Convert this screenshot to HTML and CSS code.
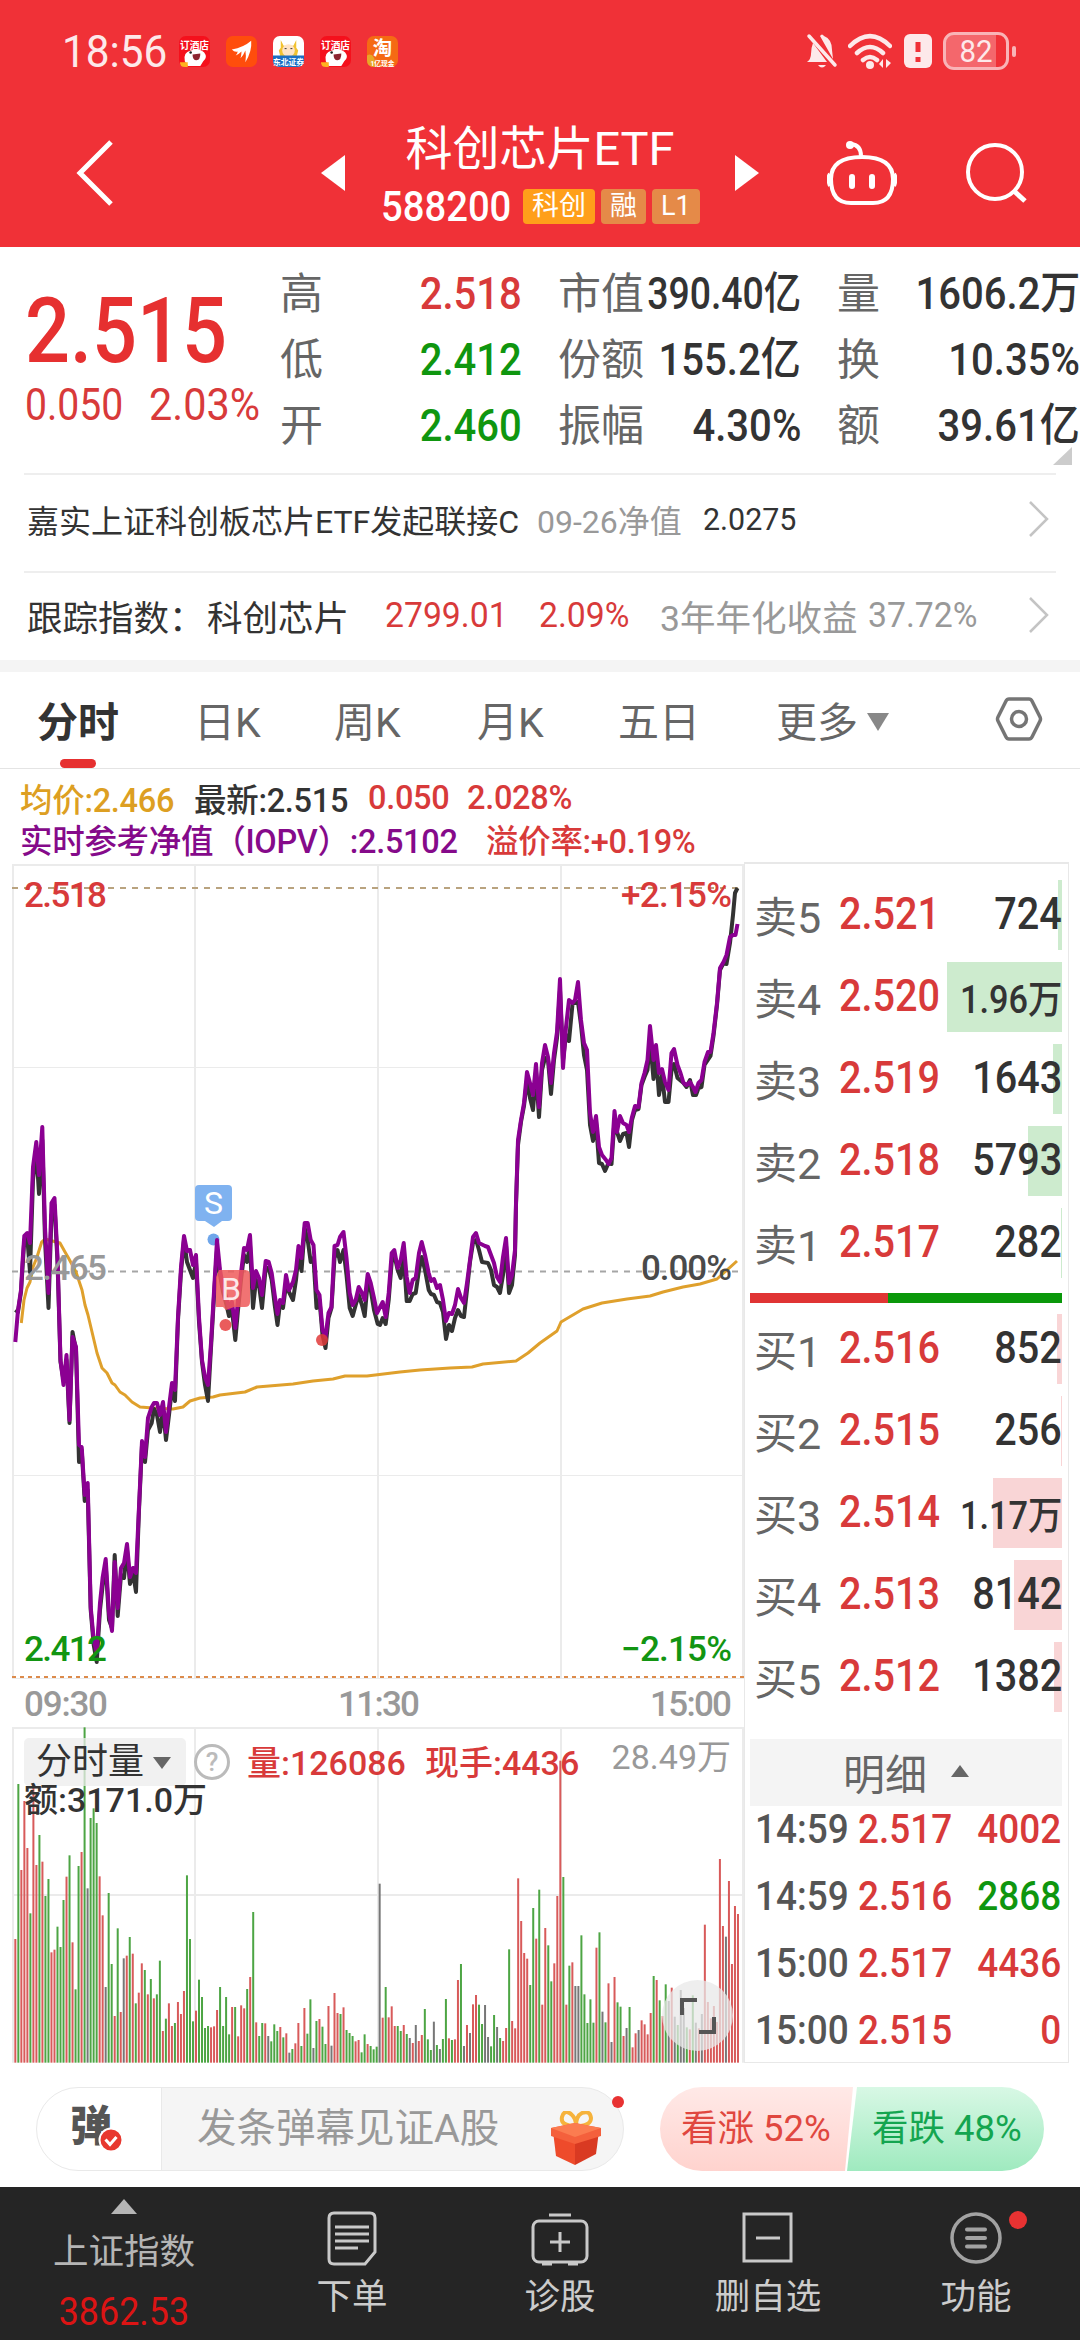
FILE: index.html
```html
<!DOCTYPE html>
<html lang="zh-CN">
<head>
    <meta charset="UTF-8">
    <meta name="viewport" content="width=device-width, initial-scale=1.0">
    <title>科创芯片ETF 588200</title>
    <link rel="stylesheet" href="styles.css">
</head>
<body>
    <header class="top">
        <div class="status-bar">
            <span class="clock">18:56</span>
            <div class="app-icons">
                <svg viewBox="0 0 32 32"><rect width="32" height="32" rx="7" fill="#f5101c"/><text x="16" y="13" class="app-text" font-size="10">订酒店</text><path d="M6 26q-2-9 6-11q9-3 14 2q4 5-1 9l-3 5H9z" fill="#fff"/><path d="M14 19l8-1q0 7-4 7t-4-6z" fill="#8d2430"/><circle cx="12" cy="17" r="1.3" fill="#222"/><path d="M1 27h8v5H6q-5 0-5-5z" fill="#ffb21e"/></svg>
                <svg viewBox="0 0 32 32"><rect width="32" height="32" rx="7" fill="#ff4d0c"/><path d="M6 14Q18 12 26 5Q27 16 20 27Q21 20 20 15Q18 20 15 23Q16 19 16 16Q13 19 10 20Q12 18 12 16Q9 17 6 14z" fill="#fff"/></svg>
                <svg viewBox="0 0 32 32"><rect width="32" height="32" rx="7" fill="#fff"/><path d="M8 4l3 6h10l3-6v8l2 3-2 8H8l-2-8 2-3z" fill="#f2c230"/><circle cx="16" cy="15" r="6.500" fill="#ffe3c4"/><path d="M12 13h2M18 13h2" stroke="#333"/><path d="M0 20h32v5q0 7-7 7H7q-7 0-7-7z" fill="#1b6fc4"/><text x="16" y="29.500" class="app-text" font-size="8">东北证券</text></svg>
                <svg viewBox="0 0 32 32"><rect width="32" height="32" rx="7" fill="#f5101c"/><text x="16" y="13" class="app-text" font-size="10">订酒店</text><path d="M6 26q-2-9 6-11q9-3 14 2q4 5-1 9l-3 5H9z" fill="#fff"/><path d="M14 19l8-1q0 7-4 7t-4-6z" fill="#8d2430"/><circle cx="12" cy="17" r="1.300" fill="#222"/><path d="M1 27h8v5H6q-5 0-5-5z" fill="#ffb21e"/></svg>
                <svg viewBox="0 0 32 32"><rect width="32" height="32" rx="7" fill="#f56a14"/><path d="M0 20q8-4 9 12H7q-7 0-7-7z" fill="#e8a727"/><text x="16" y="20" class="app-text" font-size="20">淘</text><text x="16" y="30.500" class="app-text" font-size="7">1亿现金</text></svg>
            </div>
            <div class="sys-icons">
                <svg class="bell" viewBox="0 0 32 36"><path d="M14 3q2-3 4 0q8 3 8 14l1 9zM7 10Q5 15 5 21q0 5-4 8h20zM12 32h8q-4 5-8 0z" fill="#fde9ea"/><path d="M3 3l26 29" stroke="#fde9ea" stroke-width="3.500" stroke-linecap="round"/></svg>
                <svg class="wifi" viewBox="0 0 44 36"><path d="M2 13q20-20 40 0M9 20q13-12 26 0M15 27q7-6 14 0" fill="none" stroke="#fde9ea" stroke-width="4.500" stroke-linecap="round"/><circle cx="22" cy="32" r="4" fill="#fde9ea"/><path d="M35 26v9l-4-4zM38 26v9l5-5z" fill="#fde9ea"/></svg>
                <svg class="sim" viewBox="0 0 28 34"><rect width="28" height="34" rx="6" fill="#fde9ea"/><path d="M14 8v10M14 23v5" stroke="#f03137" stroke-width="5"/></svg>
                <div class="battery"><span>82</span></div><i class="battery-nub"></i>
            </div>
        </div>
        <div class="title-bar">
            <svg class="back" viewBox="0 0 40 68"><path d="M36 3L5 34l31 31" fill="none" stroke="#fff" stroke-width="5"/></svg>
            <svg class="prev" viewBox="0 0 24 36"><path d="M24 0v36L0 18z" fill="#fff"/></svg>
            <div class="stock">
                <h1>科创芯片ETF</h1>
                <div class="stock-code">
                    <span class="code">588200</span>
                    <span class="tag tag-main">科创</span><span class="tag">融</span><span class="tag">L1</span>
                </div>
            </div>
            <svg class="next" viewBox="0 0 24 36"><path d="M0 0v36l24-18z" fill="#fff"/></svg>
            <svg class="robot" viewBox="0 0 70 66" fill="none" stroke="#fff" stroke-width="4"><path d="M34 16Q34 5 24 4"/><circle cx="23" cy="5" r="4" fill="#fff" stroke="none"/><path d="M35 17q31 0 31 22q0 24-20 24H24Q4 63 4 39q0-22 31-22z"/><path d="M3 34q-3 4 0 12M67 34q3 4 0 12"/><path d="M25 37v9M45 37v9" stroke-width="6" stroke-linecap="round"/></svg>
            <svg class="search" viewBox="0 0 62 62" fill="none" stroke="#fff" stroke-width="4"><circle cx="29" cy="30" r="27"/><path d="M48 49l11 10" stroke-width="5"/></svg>
        </div>
    </header>

    <section class="quote">
        <div class="price">
            <div class="last">2.515</div>
            <div class="change"><span>0.050</span><span>2.03%</span></div>
        </div>
        <div class="stats">
            <label>高</label><span class="red">2.518</span><label>市值</label><span class="tight">390.40亿</span><label>量</label><span>1606.2万</span>
            <label>低</label><span class="green">2.412</span><label>份额</label><span>155.2亿</span><label>换</label><span>10.35%</span>
            <label>开</label><span class="green">2.460</span><label>振幅</label><span>4.30%</span><label>额</label><span>39.61亿</span>
        </div>
        <i class="corner"></i>
    </section>

    <section class="links">
        <div class="link-row fund">
            <span>嘉实上证科创板芯片ETF发起联接C</span>
            <span class="muted">09-26净值</span>
            <span class="narrow">2.0275</span>
            <svg class="chevron" viewBox="0 0 20 36"><path d="M1 1l17 17L1 35" fill="none" stroke="#c4c4c4" stroke-width="2.500"/></svg>
        </div>
        <div class="link-row track">
            <span>跟踪指数：</span>
            <span>科创芯片</span>
            <span class="red narrow">2799.01</span>
            <span class="red narrow">2.09%</span>
            <span class="muted">3年年化收益</span>
            <span class="muted narrow">37.72%</span>
            <svg class="chevron" viewBox="0 0 20 36"><path d="M1 1l17 17L1 35" fill="none" stroke="#c4c4c4" stroke-width="2.500"/></svg>
        </div>
    </section>

    <nav class="tabs">
        <span class="active">分时</span>
        <span>日K</span>
        <span>周K</span>
        <span>月K</span>
        <span>五日</span>
        <span>更多<i class="down"></i></span>
        <svg class="hex" viewBox="0 0 50 50" fill="none" stroke="#757575" stroke-width="3.500"><path d="M15 5h20q2 0 3 2l8 16q1 2 0 4l-8 16q-1 2-3 2H15q-2 0-3-2L4 27q-1-2 0-4l8-16q1-2 3-2z"/><circle cx="25" cy="25" r="7.500"/></svg>
    </nav>

    <section class="legend">
        <div class="legend-row one"><span class="gold">均价:2.466</span><span>最新:2.515</span><span class="red">0.050</span><span class="red">2.028%</span></div>
        <div class="legend-row two"><span class="purple">实时参考净值（IOPV）:2.5102</span><span class="red">溢价率:+0.19%</span></div>
    </section>

    <main class="board">
        <div class="charts">
            <!-- Intraday line chart -->
            <svg class="trend" viewBox="0 862 744 864">
                <g class="grid">
                    <path d="M12 865H744M13 865V1678M195 865V1678M378 865V1678M561 865V1678M743 865V1678" stroke-width="2"/>
                    <path d="M12 1067.500H744M12 1475.500H744M12 1678.500H744" stroke-width="1"/>
                </g>
                <path class="dash" d="M12 888H738" stroke="#b9a37f"/>
                <path class="dash" d="M12 1271.500H738" stroke="#a5a5a5"/>
                <path d="M12 1677H744" stroke="#dc8a4a" stroke-width="2" stroke-dasharray="4 4"/>
                <g class="marks">
                    <rect x="195" y="1185" width="37" height="36" rx="4" fill="#7fb2f0"/>
                    <path d="M205 1221h17l-8 6z" fill="#7fb2f0"/>
                    <text x="213.500" y="1214" font-size="32" text-anchor="middle" fill="#fff">S</text>
                    <circle cx="213.500" cy="1239.500" r="6" fill="#6fa6ea"/>
                </g>
                <polyline class="avg" points="21.300,1323 24,1300 27,1288 30,1282 33,1267 36.700,1258 41.700,1242 45,1239 60,1243 65,1252 68.500,1258 76,1272 82,1290 85,1305 88,1315 97,1353 102,1368 107,1373 112,1383 115,1385 120,1392 125,1395 132,1402 140,1407 153,1408 173,1409 183,1407 190,1401 200,1398 213,1397 220,1395 245,1392 257,1387 293,1384 313,1381 333,1379 345,1376 367,1376 400,1372 420,1370 450,1368 472,1367 483,1364 516,1361 528,1353 540,1343 557,1331 561,1322 583,1309 602,1303 627,1299 650,1296 663,1292 683,1287 700,1284 717,1279 737,1261"/>
                <polyline class="last-line" points="15.300,1310 18,1312 21,1292 24.300,1240 27.300,1238 30,1272 33,1180 36.300,1150 39,1194 42.300,1140 45,1240 48.500,1308 51.500,1215 54.500,1205 57.500,1262 60.500,1362 63.500,1380 66.500,1360 69.500,1423 72.500,1332 76,1350 79,1462 81.700,1450 84.700,1501 87.700,1490 90.700,1610 93.700,1645 96.700,1662 100,1610 102.700,1585 105.700,1565 109,1620 112,1628 114.700,1555 117.700,1616 121,1575 124,1578 127,1550 130,1584 133,1573 136,1592 139,1510 142,1445 145,1462 148,1430 151.700,1423 154,1409 157,1415 160,1432 163,1410 166,1440 169,1415 172,1388 175,1401 178,1320 181,1272 184,1240 187,1262 190,1270 193,1278 196,1262 199,1322 202,1362 205,1385 208,1401 211,1348 214.500,1288 217,1250 220,1275 223,1292 226.500,1305 229,1316 232,1310 235.300,1340 238,1310 241,1280 244,1255 247,1262 250,1245 253,1308 256,1280 259,1285 262,1308 265.700,1268 268.700,1268 271.700,1280 274.700,1305 277.500,1325 280,1303 283,1308 286,1285 289,1292 293,1300 296,1280 298.500,1255 301.500,1271 304.700,1228 307.700,1240 310.700,1262 313.500,1258 316.500,1308 319.500,1300 322.500,1335 325.500,1348 328.500,1318 331.500,1308 334.500,1258 337.500,1250 340,1262 343.500,1250 346.500,1275 349.700,1308 352.700,1316 355.700,1305 358.700,1295 362,1305 364.700,1316 367.700,1282 370.700,1290 374,1310 377.700,1324 380,1325 382.700,1318 385.700,1324 388.700,1300 391.700,1262 394.300,1255 397.700,1270 400.700,1278 403.700,1255 406.700,1301 409.700,1301 412.700,1294 415.700,1293 419,1270 421.700,1257 425,1270 428.700,1290 431,1294 434,1295 437,1302 440,1303 443,1312 446,1339 449,1325 452,1331 455,1318 458,1310 461,1316 464,1317 467,1290 470,1262 473,1243 476,1240 479,1250 482,1262 488,1263 491,1270 494,1285 497,1287 500,1293 503,1275 506,1245 509,1293 512,1285 515,1255 516,1205 518,1145 521,1122 524,1106 527,1080 530,1098 533,1110 536,1072 539,1117 542,1070 545,1058 548,1060 551,1094 554,1060 557,1038 560,990 563,1060 566,1035 569,1041 572.500,1004 575,1003 578,1002 581,1025 584,1055 587,1070 590,1125 593,1141 596,1122 599,1163 602,1164 605,1171 608.500,1163 611.500,1164 614.500,1120 617,1132 620,1141 623,1134 626.500,1133 629,1147 632,1120 635,1110 638.500,1109 641.500,1085 644.500,1077 647.500,1070 650,1040 653.500,1079 656,1055 659,1095 662,1075 665,1102 668.500,1102 671.500,1070 674,1064 677.500,1078 683.500,1083 686.500,1087 690,1080 693,1095 696,1095 698.500,1088 701.500,1087 704.500,1065 710.500,1056 713.500,1036 717,1005 720,970 723.500,963 726.500,964 730,943 733,915 735,893 737.500,888"/>
                <polyline class="iopv" points="15.300,1342 18,1310 21,1290 22.500,1262 24.300,1236 27.300,1233 30,1243 33,1167 36.300,1142 39,1175 42.300,1127 45,1227 48.500,1293 51.500,1203 54.500,1198 57.500,1257 60.500,1360 63.500,1385 66.500,1355 69.500,1420 72.500,1337 76,1347 79,1445 81.700,1447 84.700,1495 87.700,1483 90.700,1607 93.700,1640 96.700,1652 100,1603 102.700,1577 105.700,1559 109,1613 112,1631 114.700,1562 117.700,1608 121,1568 124,1563 127,1544 130,1577 133,1568 136,1573 139,1507 142,1441 145,1457 148,1418 151.700,1407 154,1403 157,1403 160,1415 163,1402 166,1432 169,1407 172,1383 175,1390 178,1317 181,1267 184,1236 187,1251 190,1250 193,1265 196,1255 199,1317 202,1360 205,1377 208,1385 211,1343 214.500,1283 217,1240 220,1270 223,1287 226.500,1298 229,1308 232,1302 235.300,1328 238,1300 241,1273 244,1248 247,1250 250,1235 253,1288 256,1271 259,1278 262,1295 265.700,1261 268.700,1262 271.700,1273 274.700,1295 277.500,1314 280,1300 283,1303 286,1275 289,1290 293,1282 296,1270 298.500,1246 301.500,1258 304.700,1223 307.700,1223 310.700,1240 313.500,1245 316.500,1290 319.500,1295 322.500,1330 325.500,1337 328.500,1313 331.500,1307 334.500,1246 337.500,1245 340,1237 343.500,1232 346.500,1258 349.700,1293 352.700,1305 355.700,1300 358.700,1287 362,1293 364.700,1300 367.700,1274 370.700,1283 374,1298 377,1313 382.700,1302 385.700,1317 388.700,1293 391.700,1253 394.300,1250 397.700,1268 400.700,1260 403.700,1243 406.700,1277 409.700,1293 412.700,1280 415.700,1278 419,1253 421.700,1242 425,1255 428.700,1273 431,1281 434,1279 437,1288 440,1285 443,1300 446,1321 449,1313 452,1314 455,1305 458,1289 461,1298 464,1303 467,1283 470,1260 473,1237 476,1233 479,1243 485,1246 488,1247 494,1263 497,1277 500,1282 503,1257 506,1238 509,1283 512,1275 515,1250 516,1203 518,1140 521,1120 524,1103 527,1072 530,1083 533,1095 536,1064 539,1107 542,1063 545,1045 548,1057 551,1083 554,1053 557,1032 560,979 563,1068 566,1027 569,1000 572.500,1003 575,1000 578,982 581,1020 584,1043 587,1050 590,1113 593,1132 596,1116 599,1147 602,1155 606,1160 608.500,1164 611.500,1158 614.500,1111 617,1132 620,1116 623,1123 626.500,1125 629,1132 632,1117 635,1106 638.500,1107 641.500,1083 644.500,1073 647.500,1060 650,1026 653.500,1060 656,1045 659,1073 662,1069 665,1082 668.500,1090 671.500,1053 674,1049 677.500,1065 680.500,1073 683.500,1083 686.500,1085 690,1082 693,1087 695.500,1092 698.500,1083 701.500,1080 704.500,1062 708,1052 710.500,1052 713.500,1033 717,1003 720,968 723.500,962 726.500,955 730,937 733,935 735.500,935 737.500,924"/>
                <g class="marks">
                    <path d="M219 1270h26q5 0 5 5v27q0 5-5 5h-11l-8 3-3-3h-7v-30z" fill="#ee5a5a" opacity=".85"/>
                    <text x="231" y="1300" font-size="32" text-anchor="middle" fill="#fff" opacity=".85">B</text>
                    <circle cx="225.500" cy="1325" r="6" fill="#e64040" opacity=".85"/>
                    <circle cx="322" cy="1340" r="6" fill="#e03a3a" opacity=".85"/>
                </g>
                <g class="axis">
                    <text x="24" y="907" textLength="83" fill="#d83a3a">2.518</text>
                    <text x="24" y="1280" textLength="83" fill="#999">2.465</text>
                    <text x="24" y="1661" textLength="83" fill="#129512">2.412</text>
                    <text x="621" y="907" textLength="111" fill="#d83a3a">+2.15%</text>
                    <text x="641" y="1280" textLength="91" fill="#4a4a4a">0.00%</text>
                    <text x="621" y="1661" textLength="111" fill="#129512">−2.15%</text>
                    <text x="24" y="1716" textLength="84" fill="#999">09:30</text>
                    <text x="338" y="1716" textLength="82" fill="#999">11:30</text>
                    <text x="650" y="1716" textLength="82" fill="#999">15:00</text>
                </g>
            </svg>

            <!-- Volume chart, bars are filled in by script.js -->
            <div class="volume">
                <svg class="bars" viewBox="0 168 2232 1014">
                    <g class="grid" stroke-width="6"><path d="M36 174H2232M36 675H2232M39 174V1178M585 174V1178M1134 174V1178M1683 174V1178M2229 174V1178"/></g>
                    <g id="bars"></g>
                </svg>
                <div class="volume-info">
                    <span class="picker">分时量<i class="down"></i></span>
                    <span class="help">?</span>
                    <span class="red vol">量:126086</span>
                    <span class="red">现手:4436</span>
                    <span class="muted max">28.49万</span>
                </div>
                <div class="amount">额:3171.0万</div>
                <div class="expand"><svg viewBox="0 0 36 36" fill="none" stroke="#555" stroke-width="4"><path d="M17 2H2v15M34 19v15H19"/></svg></div>
            </div>
        </div>

        <aside class="book">
            <div class="depth" id="asks"></div>
            <div class="ratio"><i></i></div>
            <div class="depth" id="bids"></div>
            <div class="detail-title">明细<i class="up"></i></div>
            <div class="ticks">
                <span>14:59</span><span class="red">2.517</span><span class="red">4002</span>
                <span>14:59</span><span class="red">2.516</span><span class="green">2868</span>
                <span>15:00</span><span class="red">2.517</span><span class="red">4436</span>
                <span>15:00</span><span class="red">2.515</span><span class="red">0</span>
            </div>
        </aside>
    </main>

    <section class="social">
        <div class="danmu">
            <div class="danmu-switch">弹<svg viewBox="0 0 26 26"><circle cx="13" cy="13" r="11.500" fill="#e8382f" stroke="#fff" stroke-width="2"/><path d="M7.500 12.500l4.500 5 6.500-7.500" fill="none" stroke="#fff" stroke-width="3"/></svg></div>
            <div class="danmu-input">发条弹幕见证A股</div>
            <svg class="gift" viewBox="0 0 50 54"><path d="M25 15Q9 15 11 6q2-8 9-3 5 4 5 12Q25 5 31 2q8-3 9 5 0 8-15 8z" fill="none" stroke="#f6b33c" stroke-width="4"/><path d="M2 20l22 7v27L5 45z" fill="#ee4b2b"/><path d="M48 20l-24 7v27l21-11z" fill="#d93a22"/><path d="M0 17l24-5 26 5v8l-26 8L0 25z" fill="#f4603c"/><path d="M0 17l24-5 26 5-26 9z" fill="#fb7c50"/></svg>
            <i class="dot"></i>
        </div>
        <div class="vote">
            <span class="rise">看涨 52%</span>
            <span class="fall">看跌 48%</span>
        </div>
    </section>

    <footer class="bottom-nav">
        <div class="index"><i class="up"></i><span>上证指数</span><b>3862.53</b></div>
        <div class="nav-item">
            <svg viewBox="0 0 60 56" fill="none" stroke="#c9c9c9" stroke-width="3"><path d="M12 3h36q5 0 5 5v34L43 54H12q-5 0-5-5V8q0-5 5-5z"/><path d="M13 17h34M13 24h34M13 31h34M13 38h23"/></svg>
            <span>下单</span>
        </div>
        <div class="nav-item">
            <svg viewBox="0 0 60 56" fill="none" stroke="#c9c9c9" stroke-width="3"><rect x="3" y="11" width="54" height="41" rx="6"/><path d="M19 5h22M20 32h20M30 22v20M12 54h10M38 54h10"/></svg>
            <span>诊股</span>
        </div>
        <div class="nav-item">
            <svg viewBox="0 0 60 56" fill="none" stroke="#c9c9c9" stroke-width="3"><rect x="6" y="4" width="47" height="47"/><path d="M18 28h24"/></svg>
            <span>删自选</span>
        </div>
        <div class="nav-item">
            <svg viewBox="0 0 60 56" fill="none" stroke="#a2a2a2" stroke-width="3.500"><circle cx="30" cy="28" r="24"/><path d="M21 19.500h18M21 28h18M21 36.500h18" stroke-width="4" stroke-linecap="round"/></svg>
            <i class="dot"></i>
            <span>功能</span>
        </div>
    </footer>

    <script src="script.js"></script>
</body>
</html>
```
FILE: styles.css
```css
/* General Styles */
* {
    box-sizing: border-box;
}

body {
    margin: 0;
    width: 1080px;
    height: 2340px;
    background: #fff;
    color: #333;
    font-family: Roboto, "Noto Sans CJK SC", sans-serif;
    overflow: hidden;
}

svg {
    display: block;
    flex: none;
}

span,
label {
    white-space: nowrap;
}

.red {
    color: #d83a3a;
}

.green {
    color: #0f960f;
}

.gold {
    color: #dd9f22;
}

.purple {
    color: #850a8a;
}

.muted {
    color: #999;
}

/* Triangles */
.down,
.up {
    display: inline-block;
    border: 11px solid transparent;
}

.down {
    border-top: 14px solid #888;
    border-bottom: 0;
}

.up {
    border-bottom: 14px solid #555;
    border-top: 0;
}

/* Red Header */
.top {
    height: 247px;
    background: #f03137;
    color: #fff;
}

.status-bar {
    display: flex;
    align-items: center;
    height: 102px;
    padding: 0 64px 0 62px;
    color: #fde9ea;
}

.clock {
    width: 117px;
    font-size: 45px;
    transform: scaleX(.94);
    transform-origin: left;
}

.app-icons {
    display: flex;
    gap: 16px;
}

.app-icons svg {
    width: 31px;
    height: 31px;
}

.app-text {
    fill: #fff;
    text-anchor: middle;
    font-weight: bold;
}

.sys-icons {
    display: flex;
    align-items: center;
    margin-left: auto;
}

.bell {
    width: 32px;
    height: 36px;
    margin-right: 10px;
}

.wifi {
    width: 44px;
    height: 36px;
    margin-right: 12px;
}

.sim {
    width: 28px;
    height: 34px;
    margin-right: 11px;
}

.battery {
    width: 66px;
    height: 38px;
    border: 3px solid #f9b4b7;
    border-radius: 11px;
    background: linear-gradient(90deg, #f4676c 84%, transparent 84%);
    font-size: 32px;
    line-height: 32px;
    text-align: center;
}

.battery span {
    display: inline-block;
    transform: scaleX(.92);
}

.battery-nub {
    width: 4px;
    height: 11px;
    margin-left: 3px;
    border-radius: 2px;
    background: #f9b4b7;
}

.title-bar {
    display: flex;
    align-items: center;
    height: 145px;
    padding: 0 54px 4px 75px;
}

.back {
    width: 40px;
    height: 68px;
    margin-right: 206px;
}

.prev,
.next {
    width: 24px;
    height: 36px;
}

.stock {
    width: 390px;
    padding-bottom: 0;
}

.stock h1 {
    margin: 0 0 7px;
    font-size: 47px;
    font-weight: 400;
    line-height: 60px;
    text-align: center;
}

.stock-code {
    display: flex;
    align-items: center;
    gap: 6px;
    height: 40px;
    padding-left: 36px;
}

.code {
    width: 136px;
    font-size: 42px;
    font-weight: 500;
    transform: scaleX(.91);
    transform-origin: left;
}

.tag {
    height: 35px;
    padding: 0 9px;
    border-radius: 4px;
    background: #e58a48;
    font-size: 27px;
    line-height: 34px;
}

.tag-main {
    background: #ff9f1a;
}

.robot {
    width: 70px;
    height: 66px;
    margin-left: 68px;
}

.search {
    width: 62px;
    height: 62px;
    margin-left: auto;
    margin-right: -2px;
}

/* Quote Summary */
.quote {
    display: flex;
    position: relative;
    height: 226px;
}

.price {
    width: 281px;
    padding: 37px 0 0 25px;
    color: #e63030;
}

.last {
    width: 230px;
    font-size: 90px;
    font-weight: 500;
    line-height: 96px;
    transform: scaleX(.88);
    transform-origin: left;
}

.change {
    display: grid;
    grid-template-columns: 124px auto;
    margin-top: -1px;
    color: #d83a3a;
    font-size: 44px;
    line-height: 52px;
}

.change span {
    transform: scaleX(.89);
    transform-origin: left;
}

.change span:last-child {
    transform: scaleX(.94);
}

.stats {
    display: grid;
    grid-template-columns: 60px 181px 120px 159px 80px 199px;
    grid-auto-rows: 66px;
    align-items: center;
    padding-top: 14px;
    font-size: 45px;
    font-weight: 500;
    line-height: 60px;
}

.stats label {
    margin-left: -1px;
    color: #666;
    font-size: 43px;
    font-weight: 400;
}

.stats label:nth-of-type(3n + 2),
.stats label:nth-of-type(3n) {
    padding-left: 37px;
}

.stats span {
    justify-self: end;
    transform: scaleX(.89);
    transform-origin: right;
}

.stats .tight {
    font-size: 44px;
    transform: scaleX(.85);
}

.corner {
    position: absolute;
    right: 8px;
    bottom: 8px;
    border-left: 19px solid transparent;
    border-bottom: 18px solid #ccc;
}

/* Linked Fund And Index */
.links {
    padding: 0 24px;
    border-bottom: 12px solid #f4f4f4;
}

.link-row {
    display: grid;
    align-items: center;
    height: 98px;
    padding-left: 3px;
    border-top: 2px solid #eee;
    font-size: 32px;
}

.fund {
    grid-template-columns: 510px 166px 326px auto;
    padding-bottom: 9px;
}

.track {
    grid-template-columns: 180px 178px 154px 121px 208px 161px auto;
    height: 89px;
    padding-bottom: 3px;
    font-size: 35.5px;
}

.narrow {
    transform: scaleX(.95);
    transform-origin: left;
}

.chevron {
    width: 20px;
    height: 36px;
}

/* Period Tabs */
.tabs {
    display: grid;
    grid-template-columns: 157px 140px 143px 141px 158px 218px auto;
    align-items: center;
    height: 97px;
    padding: 0 0 3px 37px;
    border-bottom: 1px solid #e4e4e4;
    color: #666;
    font-size: 41px;
}

.tabs .active {
    position: relative;
    color: #333;
    font-weight: 700;
}

.active::after {
    content: "";
    position: absolute;
    left: 23px;
    bottom: -19px;
    width: 36px;
    height: 9px;
    border-radius: 5px;
    background: #e63030;
}

.tabs .down {
    margin-left: 9px;
    vertical-align: 6px;
    border-top-width: 18px;
}

.hex {
    width: 50px;
    height: 50px;
}

/* Chart Legend */
.legend {
    height: 93px;
    padding: 5px 0 0 20px;
    font-size: 32.5px;
    font-weight: 500;
    letter-spacing: -.3px;
}

.legend-row {
    display: grid;
    align-items: center;
    height: 41px;
}

.one {
    grid-template-columns: 174px 174px 99px auto;
}

.two {
    grid-template-columns: 466px auto;
}

/* Charts */
.board {
    display: flex;
    height: 1201px;
}

.charts {
    width: 744px;
}

.trend {
    width: 744px;
    height: 864px;
}

.grid {
    fill: none;
    stroke: #ebebeb;
}

.dash {
    stroke-width: 2;
    stroke-dasharray: 6 6;
}

.avg,
.last-line,
.iopv {
    fill: none;
    stroke-width: 4;
    stroke-linejoin: round;
}

.avg {
    stroke: #dfa02c;
    stroke-width: 3;
}

.last-line {
    stroke: #333;
}

.iopv {
    stroke: #8b0092;
}

.axis text {
    font-size: 35px;
    font-weight: 500;
}

.volume {
    position: relative;
    width: 744px;
    height: 338px;
}

.bars {
    position: absolute;
    left: 0;
    top: 0;
    width: 744px;
    height: 338px;
}

.bar-r {
    fill: #d85a5a;
}

.bar-g {
    fill: #4da544;
}

.bar-k {
    fill: #777;
}

.volume-info {
    display: flex;
    position: relative;
    align-items: center;
    padding: 12px 13px 0 24px;
    font-size: 34px;
    font-weight: 500;
}

.volume-info .red {
    margin-top: -3px;
}

.picker {
    width: 162px;
    height: 48px;
    padding-left: 12px;
    border-radius: 5px;
    background: rgba(236, 236, 236, .75);
    font-weight: 400;
    font-size: 36px;
    line-height: 48px;
}

.picker .down {
    margin-left: 9px;
    vertical-align: 5px;
    border-width: 12px 9px 0;
    border-top-color: #666;
}

.help {
    width: 36px;
    height: 36px;
    margin: 0 17px 0 8px;
    border: 3px solid #bbb;
    border-radius: 50%;
    color: #bbb;
    font-size: 26px;
    line-height: 30px;
    text-align: center;
}

.volume-info .vol {
    width: 178px;
}

.max {
    margin-left: auto;
    margin-top: -16px;
    font-weight: 400;
}

.amount {
    position: relative;
    margin-top: -8px;
    padding-left: 24px;
    font-size: 34px;
    font-weight: 500;
    line-height: 44px;
}

.expand {
    display: flex;
    position: absolute;
    left: 662px;
    top: 254px;
    width: 71px;
    height: 71px;
    align-items: center;
    justify-content: center;
    border-radius: 50%;
    background: rgba(232, 232, 232, .75);
}

.expand svg {
    width: 36px;
    height: 36px;
}

/* Order Book */
.book {
    width: 325px;
    padding: 10px 6px 0 5px;
    border: 1px solid #e8e8e8;
    border-top-width: 2px;
}

.level {
    display: grid;
    grid-template-columns: 85px 100px auto;
    align-items: center;
    height: 82px;
    padding: 0 0 3px 4px;
    background-repeat: no-repeat;
    background-position: right center;
    font-size: 45px;
    font-weight: 500;
}

.level span {
    transform: scaleX(.88);
    transform-origin: left;
}

.level span:first-child {
    color: #666;
    font-size: 43px;
    font-weight: 400;
    transform: none;
}

.level span:last-child {
    justify-self: end;
    transform-origin: right;
}

.level .wan {
    font-size: 39px;
}

#asks .level {
    background-image: linear-gradient(#cdebce, #cdebce);
}

#bids .level {
    background-image: linear-gradient(#f9d5d6, #f9d5d6);
}

.ratio {
    height: 10px;
    margin: 9px 0 5px;
    background: #0a980a;
}

.ratio i {
    display: block;
    width: 138px;
    height: 10px;
    background: #e03434;
}

.detail-title {
    display: flex;
    align-items: center;
    justify-content: center;
    height: 67px;
    margin-top: 21px;
    padding-bottom: 3px;
    background: #f4f4f4;
    color: #666;
    font-size: 42px;
}

.detail-title .up {
    margin-left: 24px;
    border-width: 0 9px 12px;
    border-bottom-color: #666;
}

.ticks {
    display: grid;
    grid-template-columns: 103px 100px auto;
    grid-auto-rows: 67px;
    padding: 0 1px 0 5px;
    font-size: 41px;
    font-weight: 500;
    line-height: 46px;
    color: #555;
}

.ticks span {
    transform: scaleX(.9);
    transform-origin: left;
}

.ticks span:nth-child(3n) {
    justify-self: end;
    transform-origin: right;
}

/* Comment Bar */
.social {
    display: flex;
    height: 124px;
    padding: 24px 36px 0;
}

.danmu {
    display: flex;
    position: relative;
    width: 588px;
    height: 84px;
    border: 1px solid #e9e9e9;
    border-radius: 42px;
    background: linear-gradient(90deg, #fff 124px, #e9e9e9 124px, #e9e9e9 125px, #f5f5f5 125px);
}

.danmu-switch {
    position: relative;
    width: 125px;
    padding-left: 33px;
    color: #555;
    font-size: 42px;
    font-weight: 900;
    line-height: 77px;
}

.danmu-switch svg {
    position: absolute;
    left: 61px;
    top: 39px;
    width: 26px;
    height: 26px;
}

.danmu-input {
    width: 389px;
    padding-left: 35px;
    color: #999;
    font-size: 39.5px;
    line-height: 82px;
}

.gift {
    width: 50px;
    height: 54px;
    margin-top: 23px;
}

.dot {
    position: absolute;
    width: 18px;
    height: 18px;
    border-radius: 50%;
    background: #e83232;
}

.danmu .dot {
    right: -1px;
    top: 8px;
    width: 12px;
    height: 12px;
}

.vote {
    display: flex;
    width: 384px;
    height: 84px;
    margin-left: 36px;
    border-radius: 42px;
    overflow: hidden;
    font-size: 36.5px;
    line-height: 83px;
}

.rise {
    width: 195px;
    padding-left: 21px;
    background: linear-gradient(#ffe9e7, #ffd3ce);
    clip-path: polygon(0 0, 100% 0, 185px 100%, 0 100%);
    color: #e0473f;
}

.fall {
    width: 199px;
    margin-left: -6px;
    padding-left: 25px;
    background: linear-gradient(#d8f8e5, #9feabf);
    clip-path: polygon(10px 0, 100% 0, 100% 100%, 0 100%);
    color: #14a550;
}

/* Bottom Navigation */
.bottom-nav {
    display: grid;
    grid-template-columns: 248px 208px 208px 208px 208px;
    height: 153px;
    background: #252525;
    color: #ccc;
    font-size: 35.5px;
}

.index {
    display: flex;
    flex-direction: column;
    align-items: center;
    padding-top: 12px;
    color: #b5b5b5;
    line-height: 50px;
}

.index .up {
    margin-bottom: 13px;
    border-width: 0 13px 15px;
    border-bottom-color: #b5b5b5;
}

.index b {
    margin-top: 10px;
    color: #dc1414;
    font-size: 39px;
    font-weight: 400;
    transform: scaleX(.92);
}

.nav-item {
    display: flex;
    position: relative;
    flex-direction: column;
    align-items: center;
    padding-top: 23px;
    line-height: 50px;
}

.nav-item svg {
    width: 60px;
    height: 56px;
    margin-bottom: 6px;
}

.nav-item .dot {
    left: 137px;
    top: 24px;
}
```
FILE: script.js
```js
// r = up, g = down, k = flat; number is the top of the bar, baseline is 1178
const volumes = `r807 g342 r600 r393 r534 g730 r342 r585 g495 r575 g678 g627 r847 r839 g770 g831 g690 r620 g556 r817
g958 g588 r546 g172 k655 g444 g415 g459 r619 r736 k951 g669 g882 r1038 g775 r1026 k865 r857 g801 r851
g1000 r968 r880 g900 r973 g927 r985 g973 g872 r1083 g1046 r1000 r1068 g1059 r996 r1032 r963 g616 g807 g1054
r1022 g929 g981 g1074 g1068 r1072 r1069 r1020 g951 g1068 g981 g1093 r1011 g1011 r1099 r1006 r1015 g957 r921 g726
r1057 g1098 g1059 r1060 k1098 g1114 g1063 g1083 r1071 g1102 r1090 k1148 g1137 r1120 r1059 g1128 r1014 g1091 g988 k1134
g1053 r1047 g1070 g1122 r1008 k1127 r969 r1029 g1032 r1012 g1080 g1089 g1098 r1114 r1110 g1147 g1093 r1122 g1128 g1138
g1130 k641 r1043 g951 r1042 r1009 r1068 g1068 g1083 r1065 g1092 k1104 r1119 k1065 r1113 r1095 g1017 g1108 g1140 k1055
g1125 k1137 g1107 g987 r1105 g1110 r1108 r930 g882 k1128 r1065 k1089 r1003 r975 g1004 g1062 k1005 k1101 g1129 g1035
k1071 g1104 r1113 r1074 g838 r1053 r1075 r625 r753 r849 r866 g945 g714 r806 g659 r1004 r774 g826 g934 r880
r678 r272 g621 r1004 g887 r877 k948 k948 g796 g973 g1059 g988 g1058 r833 g787 k1025 g1057 r940 k1116 r921
g997 g1010 r1098 k1074 g1011 r1132 r1090 k1080 r1051 r1063 r1093 r1029 g918 r930 g991 r1038 g943 k993 r953 k1040
g1065 k960 k1014 g1072 r1078 g976 k1058 r1075 k1032 r764 r996 r1045 r1008 r1056 r567 r768 k800 r633 r882 r708 r732`.split(/\s+/);

document.getElementById('bars').innerHTML = volumes.map((v, i) => {
    const top = Number(v.slice(1));
    return `<rect class="bar-${v[0]}" x="${43 + i * 9.033}" y="${top}" width="6" height="${1178 - top}"/>`;
}).join('');

const asks = [
    ['卖5', '2.521', '724', 4],
    ['卖4', '2.520', '1.96万', 115],
    ['卖3', '2.519', '1643', 9],
    ['卖2', '2.518', '5793', 34],
    ['卖1', '2.517', '282', 1]
];

const bids = [
    ['买1', '2.516', '852', 5],
    ['买2', '2.515', '256', 1],
    ['买3', '2.514', '1.17万', 69],
    ['买4', '2.513', '8142', 48],
    ['买5', '2.512', '1382', 8]
];

function drawDepth(id, rows) {
    document.getElementById(id).innerHTML = rows.map(([name, price, qty, width]) => `
        <div class="level" style="background-size: ${width}px 70px">
            <span>${name}</span>
            <span class="red">${price}</span>
            <span class="${qty.includes('万') ? 'wan' : ''}">${qty}</span>
        </div>`).join('');
}

drawDepth('asks', asks);
drawDepth('bids', bids);
```
